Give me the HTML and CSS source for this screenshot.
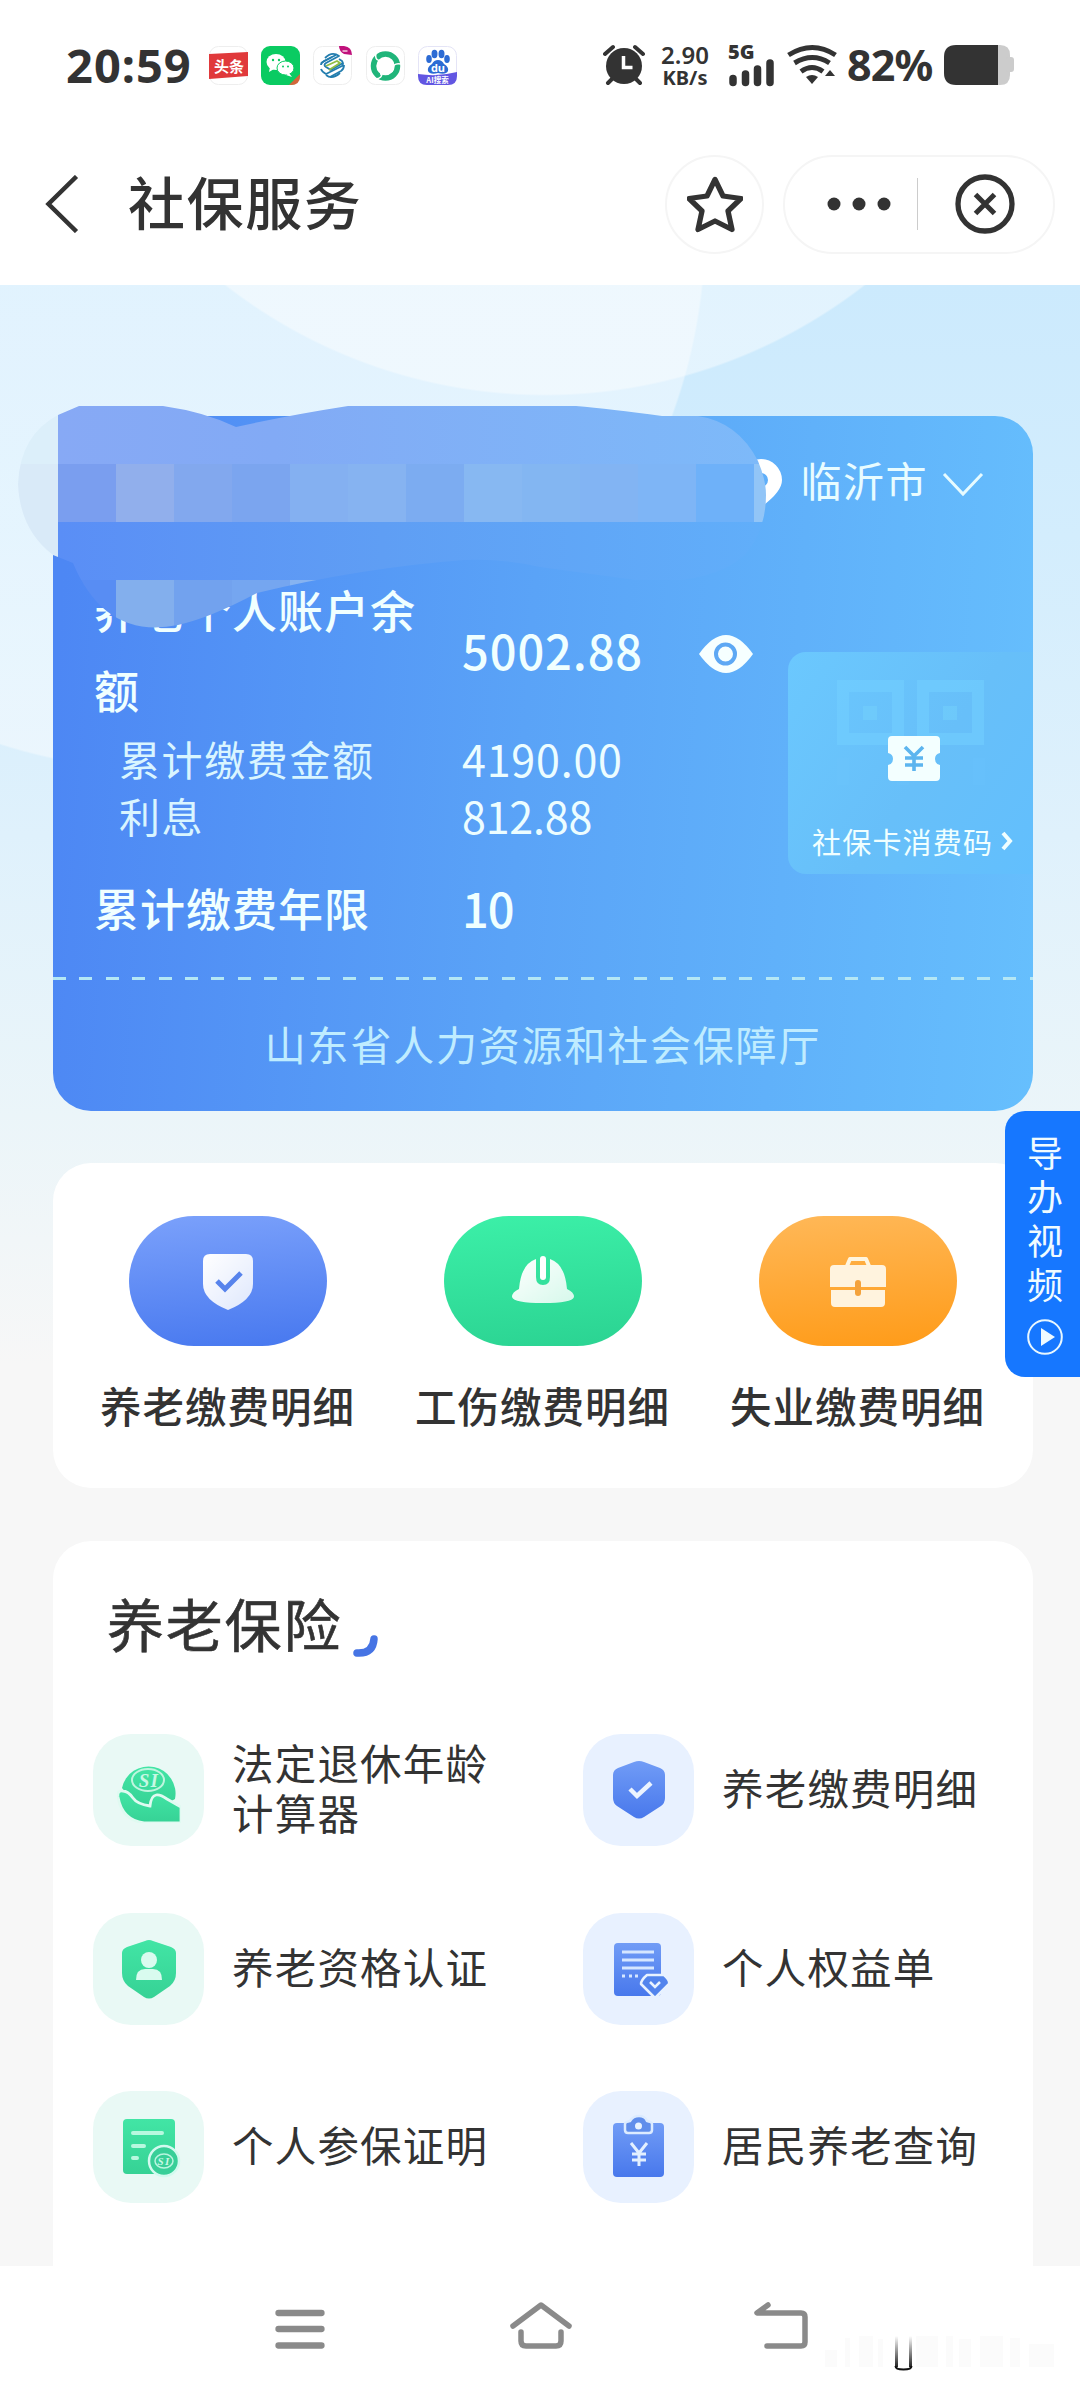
FILE: index.html
```html
<!DOCTYPE html>
<html lang="zh-CN">
<head>
<meta charset="utf-8">
<title>社保服务</title>
<link rel="stylesheet" href="styles.css">
</head>
<body>
<svg class="defs" width="0" height="0" aria-hidden="true">
  <defs>
    <linearGradient id="green" x1="0" y1="0" x2="0" y2="1"><stop offset="0" stop-color="#42e5a5"/><stop offset="1" stop-color="#36d295"/></linearGradient>
    <linearGradient id="blue" x1="0" y1="0" x2="0" y2="1"><stop offset="0" stop-color="#719cf6"/><stop offset="1" stop-color="#4878ec"/></linearGradient>
    <linearGradient id="pale" x1="0" y1="0" x2="1" y2="1"><stop offset="0" stop-color="#fff"/><stop offset="1" stop-color="#fff" stop-opacity=".8"/></linearGradient>
  </defs>
</svg>
<header class="statusbar">
  <span class="clock">20:59</span>
  <div class="apps">
    <svg class="app" viewBox="0 0 39 39"><rect x=".5" y=".5" width="38" height="38" rx="9" fill="#fff" stroke="#eee"/><path d="M0 8L39 6V30L0 33Z" fill="#e0393b"/><text x="5" y="25.5" class="app-toutiao">头条</text></svg>
    <svg class="app" viewBox="0 0 39 39"><rect width="39" height="39" rx="9" fill="#0acb62"/><path d="M28 39L39 28V30Q39 39 30 39Z" fill="#d4663b"/><ellipse cx="15" cy="16" rx="9.5" ry="8" fill="#fff"/><path d="M9 21l-1 5 5-3z" fill="#fff"/><circle cx="12" cy="14" r="1.2" fill="#0acb62"/><circle cx="18" cy="14" r="1.2" fill="#0acb62"/><ellipse cx="24.500" cy="22" rx="8.500" ry="7" fill="#fff" stroke="#0acb62"/><path d="M28 27l3 4-6-2z" fill="#fff"/><circle cx="22" cy="20.500" r="1" fill="#0acb62"/><circle cx="27" cy="20.500" r="1" fill="#0acb62"/></svg>
    <svg class="app" viewBox="0 0 39 39"><rect x=".5" y=".5" width="38" height="38" rx="9" fill="#fff" stroke="#eee"/><path d="M26 0h5q8 1 8 9l-8-1q-5-3-5-8z" fill="#c1127c"/><path d="M29.500 5h5" stroke="#e79cc6" stroke-width="2"/><g fill="none" stroke-width="1.800" stroke-linejoin="round"><path d="M12 12q7-7 14-2l-13 7q-3 2 0 4l5 3 12-7M8 17l11-6M13 29q6 5 14-2" stroke="#237dae"/><path d="M8 19q0-2 3-4l12-6M31 19q0 4-3 6l-11 6M8 23q1 3 5 5l16-8q2-2 0-5l-3-2" stroke="#237dae"/><path d="M13 20l11-5 3 2-11 7" stroke="#90bd43"/></g></svg>
    <svg class="app" viewBox="0 0 39 39"><rect x=".5" y=".5" width="38" height="38" rx="9" fill="#fff" stroke="#eee"/><circle cx="19.500" cy="20" r="12" fill="none" stroke="#20b57a" stroke-width="5.500"/><path d="M10 7q-2 9 8 8M35 18q-9-2-9 8M10 33q8-1 5-9" fill="none" stroke="#fff" stroke-width="1.500"/><path d="M14 24v5l4-2z" fill="#fff"/></svg>
    <svg class="app" viewBox="0 0 39 39"><rect x=".5" y=".5" width="38" height="38" rx="9" fill="#fff" stroke="#e4e4f6"/><path d="M0 28Q20 31 39 26V30Q39 39 30 39H9Q0 39 0 30Z" fill="#6256e2"/><g fill="#2c6bd4"><ellipse cx="11" cy="13" rx="2.800" ry="4"/><ellipse cx="16.500" cy="8" rx="3" ry="4.200"/><ellipse cx="23.500" cy="8" rx="3" ry="4.200"/><ellipse cx="29" cy="13" rx="2.800" ry="4"/><path d="M20 14q4 0 6 4 5 3 4 7-2 4-10 2-8 2-10-2-1-4 4-7 2-4 6-4z"/></g><text x="20" y="25.500" class="app-du">du</text><text x="19.500" y="36.800" class="app-ai">AI搜索</text></svg>
  </div>
  <svg class="alarm" viewBox="0 0 42 42"><path d="M2 10l8-7M40 10l-8-7M5 39l6-6M37 39l-6-6" stroke="#333" stroke-width="4" fill="none" stroke-linecap="round"/><circle cx="21" cy="22" r="18" fill="#333"/><path d="M20.500 12v11.500h9" fill="none" stroke="#fff" stroke-width="3.500"/></svg>
  <div class="speed"><b>2.90</b><span>KB/s</span></div>
  <div class="cell"><b>5G</b>
    <svg viewBox="0 0 46 28" width="46" height="28"><path d="M4 19.500v4M16.500 15v8.500M28.500 10v13.500M41 4v19.500" stroke="#333" stroke-width="7.500" stroke-linecap="round"/></svg>
  </div>
  <svg class="wifi" viewBox="0 0 50 42"><g fill="none" stroke="#333" stroke-width="5"><path d="M1.500 11q24-15 47 0"/><path d="M7.500 19q18-11 35 0"/><path d="M14 27.500q11-8 22 0"/></g><path d="M19 33q6-4 12 0l-6 7z" fill="#333"/><path d="M38 32l5-6 5 6z" fill="#333"/></svg>
  <span class="percent">82%</span>
  <svg class="battery" viewBox="0 0 70 40"><path d="M53 0h3q10 0 10 10v20q0 10-10 10h-3z" fill="#ccc"/><rect x="62" y="12" width="8" height="15" rx="3" fill="#ccc"/><path d="M54 0H12Q0 0 0 12v16q0 12 12 12h42z" fill="#333"/></svg>
</header>

<nav class="titlebar">
  <svg class="back" viewBox="0 0 34 58"><path d="M31.500 1.500L3.500 29l28 27.500" fill="none" stroke="#333" stroke-width="4.500"/></svg>
  <h1>社保服务</h1>
  <div class="round"><svg viewBox="0 0 56 58" width="56" height="58"><path d="M28 4.500l8 16.500 18 2.500-13 12.500 4 18.500-17-8.500-17 8.500 4-18.500L2 23.500 20 21z" fill="none" stroke="#333" stroke-width="5.300" stroke-linejoin="round"/></svg></div>
  <div class="capsule">
    <svg viewBox="0 0 64 14" width="64" height="14" fill="#333"><circle cx="7" cy="7" r="6.500"/><circle cx="32" cy="7" r="6.500"/><circle cx="57" cy="7" r="6.500"/></svg>
    <i></i>
    <svg viewBox="0 0 60 60" width="60" height="60" fill="none" stroke="#333"><circle cx="30" cy="30" r="27" stroke-width="5.300"/><path d="M20.500 20.500l19 19M39.500 20.500l-19 19" stroke-width="5"/></svg>
  </div>
</nav>

<main class="page">
  <section class="account-card">
    <div class="city">
      <svg viewBox="0 0 44 50" width="44" height="50"><path fill-rule="evenodd" d="M22 1a21 21 0 0 1 21 21q0 12-21 27Q1 34 1 22A21 21 0 0 1 22 1zm0 14a7 7 0 1 0 0 14 7 7 0 0 0 0-14z" fill="#fff"/></svg>
      <span>临沂市</span>
      <svg viewBox="0 0 42 26" width="42" height="26"><path d="M2 2l19 20L40 2" fill="none" stroke="#e6fbff" stroke-width="3"/></svg>
    </div>
    <div class="account-body">
      <dl class="figures">
        <div class="row main balance"><dt>养老个人账户余额</dt><dd>5002.88</dd>
          <svg viewBox="0 0 54 38" width="54" height="38"><path d="M0 19Q27-19 54 19 27 57 0 19z" fill="#f6ffff"/><circle cx="26.500" cy="19" r="9.500" fill="none" stroke="#5da8f4" stroke-width="4"/></svg>
        </div>
        <div class="row sub"><dt>累计缴费金额</dt><dd>4190.00</dd></div>
        <div class="row sub interest"><dt>利息</dt><dd>812.88</dd></div>
        <div class="row main years"><dt>累计缴费年限</dt><dd>10</dd></div>
      </dl>
      <a class="paycode">
        <svg viewBox="0 0 150 105" width="150" height="105">
          <g fill="none" stroke="#73d0ff" stroke-width="12"><path d="M6 6h55v53H6zM86 6h55v53H86z" opacity=".55"/></g>
          <path d="M26 26h14v14H26zM106 26h14v14h-14z" fill="#73cffc" opacity=".55"/><path d="M0 78h12v27H0zM60 78h12v27H60zM136 78h12v27h-12z" fill="#70c9ff" opacity=".18"/>
          <path d="M55 56h44q4 0 4 4v13q-5 1-5 6t5 6v12q0 4-4 4H55q-4 0-4-4V85q5-1 5-6t-5-6V60q0-4 4-4z" fill="#f3ffff"/>
          <path d="M68 67l9 9 9-9M77 76v15M68 78h18M68 85h18" fill="none" stroke="#5cb5ef" stroke-width="3.600"/>
        </svg>
        <span>社保卡消费码 <svg viewBox="0 0 12 20" width="12" height="20"><path d="M2 2l7 8-7 8" fill="none" stroke="#effeff" stroke-width="4"/></svg></span>
      </a>
    </div>
    <div class="dashes"></div>
    <p class="bureau">山东省人力资源和社会保障厅</p>
    <svg class="mosaic" viewBox="18 406 760 232" width="760" height="232">
      <defs>
        <clipPath id="smudge"><path d="M18 484Q20 435 58 415L79 406H163Q205 412 236 427Q290 415 348 406H576Q610 409 662 416L698 416Q738 422 758 461Q766 480 766 495Q766 530 745 555Q715 582 650 582L540 567Q500 558 464 560Q360 568 257 593Q210 618 178 625Q105 640 73 563L53 555Q20 530 18 484Z"/></clipPath>
        <linearGradient id="rowTop"><stop offset="0" stop-color="#87a9f5"/><stop offset=".3" stop-color="#82aaf5"/><stop offset="1" stop-color="#7dbaf9"/></linearGradient>
        <linearGradient id="rowMid"><stop offset="0" stop-color="#5a8ef6"/><stop offset=".45" stop-color="#5f9ef4"/><stop offset="1" stop-color="#61affa"/></linearGradient>
      </defs>
      <g clip-path="url(#smudge)" shape-rendering="crispEdges">
        <path d="M18 406h40v58H18z" fill="#dceffa"/><path d="M18 464h40v100H18z" fill="#d9eaf8"/>
        <path d="M58 406h720v58H58z" fill="url(#rowTop)"/>
        <path d="M58 464h58v58H58z" fill="#7a9eef"/><path d="M116 464h58v58h-58z" fill="#91afec"/><path d="M174 464h58v58h-58z" fill="#82a8ee"/><path d="M232 464h58v58h-58z" fill="#7ba5ef"/><path d="M290 464h58v58h-58z" fill="#84b0f1"/><path d="M348 464h58v58h-58z" fill="#86b3f1"/><path d="M406 464h58v58h-58z" fill="#7cacf1"/><path d="M464 464h58v58h-58z" fill="#87b8f2"/><path d="M522 464h58v58h-58z" fill="#83b6f2"/><path d="M580 464h58v58h-58z" fill="#82b4f3"/><path d="M638 464h58v58h-58z" fill="#7eb5f6"/><path d="M696 464h58v58h-58z" fill="#6eb1f9"/><path d="M754 464h24v58h-24z" fill="#92c5f7"/>
        <path d="M58 522h720v58H58z" fill="url(#rowMid)"/>
        <path d="M58 580h58v58H58z" fill="#588df3"/><path d="M116 580h58v58h-58z" fill="#83afed"/><path d="M174 580h58v58h-58z" fill="#72a2ee"/><path d="M232 580h58v58h-58z" fill="#75a6f0"/><path d="M290 580h58v58h-58z" fill="#86b3f1"/>
      </g>
    </svg>
  </section>

  <section class="quick">
    <a><span class="pill pill-blue"><svg viewBox="0 0 66 66" width="66" height="66"><path d="M15 6h36q7 0 7 7v23q0 16-25 26Q8 52 8 36V13q0-7 7-7z" fill="url(#pale)"/><path d="M22 33l8 8 16-16" fill="none" stroke="#5783ec" stroke-width="5"/></svg></span>养老缴费明细</a>
    <a><span class="pill pill-green"><svg viewBox="0 0 66 66" width="66" height="66"><path d="M9 41Q11 16 26 11v18q0 8 7 8t7-8V11q15 5 17 30 7 3 7 8-2 6-31 6T2 49q0-5 7-8z" fill="url(#pale)"/><path d="M33 11v18" stroke="#fff" stroke-width="6" stroke-linecap="round"/></svg></span>工伤缴费明细</a>
    <a><span class="pill pill-orange"><svg viewBox="0 0 66 66" width="66" height="66"><path d="M22 18l3-7h16l3 7" fill="none" stroke="#fff5df" stroke-width="4" stroke-linejoin="round"/><path d="M9 17h48q4 0 4 4v18H5V21q0-4 4-4zM6 42h54v13q0 4-4 4H10q-4 0-4-4z" fill="#fff3de"/><path d="M33 35v10" stroke="#f4a23c" stroke-width="6" stroke-linecap="round"/></svg></span>失业缴费明细</a>
  </section>

  <section class="pension">
    <h2>养老保险<svg viewBox="0 0 26 24" width="26" height="24"><path d="M4 19Q20 20 21 5" fill="none" stroke="#4674e4" stroke-width="7.500" stroke-linecap="round"/></svg></h2>
    <div class="services">
      <a><span class="tile mint"><svg viewBox="0 0 64 66" width="64" height="66"><path d="M5 31A27 27 0 1 1 58 42L44 50H20z" fill="url(#green)"/><ellipse cx="31" cy="23" rx="16" ry="11" fill="none" stroke="#bff5df" stroke-width="2"/><text x="32" y="30" class="si">SI</text><path d="M1 40Q0 33 6 34q5 0 10 7 4 6 17 8 1-10 6-11 4-1 11 4l14 8v16H27Q5 63 1 40z" fill="url(#green)" stroke="#e0faf1" stroke-width="2.800"/></svg></span>法定退休年龄<br>计算器</a>
      <a><span class="tile sky"><svg viewBox="0 0 64 66" width="64" height="66"><path d="M27 5q5-2 10 0l16 6q5 2 5 7v23q0 5-4 8L37 60q-5 3-10 0L10 49q-4-3-4-8V18q0-5 5-7z" fill="url(#blue)"/><path d="M23 32l7 7 14-13" fill="none" stroke="#ebf4ff" stroke-width="4.500"/></svg></span>养老缴费明细</a>
      <a><span class="tile mint"><svg viewBox="0 0 64 66" width="64" height="66"><path d="M28 5q4-2 8 0l18 6q5 2 5 6v20q0 8-6 13L37 61q-5 3-10 0L11 50q-6-5-6-13V17q0-4 5-6z" fill="url(#green)"/><circle cx="32" cy="24" r="8" fill="#d9fbef"/><path d="M19 44q0-11 9-11h8q9 0 9 11z" fill="#d9fbef"/></svg></span>养老资格认证</a>
      <a><span class="tile sky"><svg viewBox="0 0 64 66" width="64" height="66"><rect x="7" y="7" width="47" height="53" rx="4" fill="url(#blue)"/><path d="M15 16h32M15 24h32M15 32h32M15 40h3M22 40h3M28 40h3" stroke="#d5e6ff" stroke-width="2.800"/><path d="M40 39h17q6 5 5 9L48 62 34 48q0-4 6-9z" fill="#5284ed" stroke="#e8f2ff" stroke-width="2.500" stroke-linejoin="round"/><path d="M43 46l5 5 5-5" fill="none" stroke="#e8f2ff" stroke-width="2.500"/></svg></span>个人权益单</a>
      <a><span class="tile mint"><svg viewBox="0 0 64 66" width="64" height="66"><rect x="6" y="5" width="52" height="55" rx="4" fill="url(#green)"/><path d="M16 19h29M16 32h11M16 44h4" stroke="#b8f8df" stroke-width="4" stroke-linecap="round"/><circle cx="47" cy="47" r="15" fill="#38cf98" stroke="#d3faef" stroke-width="2.500"/><ellipse cx="47" cy="47" rx="9" ry="7" fill="none" stroke="#baf5df" stroke-width="1.500"/><text x="47" y="51" class="si si-small">SI</text></svg></span>个人参保证明</a>
      <a><span class="tile sky"><svg viewBox="0 0 64 66" width="64" height="66"><rect x="6" y="9" width="51" height="54" rx="4" fill="url(#blue)"/><path d="M18 10q0-2 5-3 3-5 9-5t8 5q5 1 5 3v6q0 3-3 3H21q-3 0-3-3z" fill="#608eeb" stroke="#dcebff" stroke-width="2.500" stroke-linejoin="round"/><circle cx="31.500" cy="12" r="3.500" fill="#e8f3ff"/><path d="M24 29l8 10 8-10M32 39v13M25 40h14M25 46h14" fill="none" stroke="#e3f0ff" stroke-width="3"/></svg></span>居民养老查询</a>
    </div>
  </section>
</main>

<aside class="guide">
  <span>导</span><span>办</span><span>视</span><span>频</span>
  <svg viewBox="0 0 36 36" width="36" height="36"><circle cx="18" cy="18" r="16.800" fill="none" stroke="#e8f7ff" stroke-width="2"/><path d="M14 9l14 9-14 9z" fill="#f0fbff"/></svg>
</aside>

<footer class="navbar">
  <svg viewBox="0 0 50 48" width="50" height="48"><path d="M3.500 12h43M3.500 28h43M3.500 44.500h43" stroke="#8a8a8a" stroke-width="6.300" stroke-linecap="round"/></svg>
  <svg viewBox="0 0 64 48" width="64" height="48" fill="none" stroke="#8a8a8a" stroke-width="5.500" stroke-linecap="round" stroke-linejoin="round"><path d="M4 25L32 4l28 21"/><path d="M12 31v9q0 5 5 5h30q5 0 5-5v-9"/></svg>
  <svg viewBox="0 0 54 48" width="54" height="48" fill="none" stroke="#8a8a8a" stroke-width="5.500" stroke-linecap="round" stroke-linejoin="round"><path d="M14 4L3 12h44q4 0 4 4v25q0 4-4 4H13"/></svg>
  <svg class="smear" viewBox="0 0 230 38" width="230" height="38">
    <defs><linearGradient id="fade" x1="0" y1="0" x2="0" y2="1"><stop offset="0" stop-color="#222" stop-opacity="0"/><stop offset="1" stop-color="#222"/></linearGradient></defs>
    <path d="M0 16h12v17H0zM20 4h5v29h-5zM34 2h14v31H34zM53 5h5v28h-5zM91 2h22v31H91zM121 2h7v31h-7zM134 5h12v28h-12zM155 2h23v31h-23zM185 4h10v29h-10zM204 10h25v23h-25z" fill="#fbfbfb"/>
    <path d="M70 2h3v31h-3zM84 2h3v31h-3z" fill="url(#fade)"/><path d="M70.500 32q0 3.500 8 3.500t8-3.500" fill="none" stroke="#111" stroke-width="2"/>
  </svg>
</footer>
</body>
</html>
```
FILE: styles.css
```css
* { box-sizing: border-box; }
body {
  position: relative;
  width: 1080px;
  height: 2392px;
  margin: 0;
  overflow: hidden;
  display: flex;
  flex-direction: column;
  background: #fff;
  color: #333;
  font-family: "Noto Sans CJK SC", "Noto Sans", sans-serif;
}
h1, h2, p, dl, dt, dd { margin: 0; font-weight: 500; }
svg { display: block; flex: none; }
.defs { position: absolute; }

/* status bar */
.statusbar {
  height: 130px;
  display: flex;
  align-items: center;
  font-family: "Noto Sans", sans-serif;
  font-weight: 700;
  white-space: nowrap;
}
.clock { width: 143px; margin-left: 66px; padding-bottom: 1px; font-size: 47px; letter-spacing: 1px; }
.apps { display: flex; gap: 13.200px; width: 394px; }
.app { width: 39px; height: 39px; }
.app-toutiao { font: 700 15px "Noto Sans CJK SC", sans-serif; fill: #fff; }
.app-du { font: 700 11px "Open Sans", sans-serif; fill: #fff; text-anchor: middle; }
.app-ai { font: 700 7.5px "Noto Sans CJK SC", sans-serif; fill: #fff; text-anchor: middle; }
.alarm { width: 42px; height: 42px; }
.speed {
  width: 80px;
  margin-right: 3px;
  padding-top: 2px;
  display: flex;
  flex-direction: column;
  align-items: center;
  font-size: 20px;
  line-height: 23px;
}
.speed b { font-size: 24px; font-weight: 600; }
.cell { width: 59px; height: 42px; padding-top: 1px; display: flex; flex-direction: column; font-size: 20px; line-height: 14px; }
.cell svg { margin-left: 1px; }
.wifi { width: 50px; height: 42px; }
.percent { width: 107px; padding-left: 10px; padding-bottom: 1px; font-size: 43px; letter-spacing: -.8px; }
.battery { width: 70px; height: 40px; }

/* title bar */
.titlebar { height: 155px; padding-bottom: 7px; display: flex; align-items: center; }
.back { width: 34px; height: 58px; margin-left: 45px; }
h1 { flex: none; width: 586px; padding: 0 0 8px 49px; font-size: 57px; letter-spacing: 1.6px; line-height: 80px; }
.round, .capsule { flex: none; height: 99px; border: 2px solid #f5f5f5; border-radius: 50px; display: flex; align-items: center; }
.round { width: 99px; justify-content: center; margin-right: 19px; }
.capsule { width: 272px; padding-left: 42px; }
.capsule i { width: 1px; height: 52px; margin: 0 37px 0 26px; background: #ccc; }

/* page */
.page {
  height: 1981px;
  padding: 131px 47px 0 53px;
  overflow: hidden;
  background:
    radial-gradient(circle at 545px -410px, rgba(255,255,255,.44) 519px, transparent 521px),
    radial-gradient(circle at 165px -55px, rgba(255,255,255,.42) 539px, transparent 541px),
    linear-gradient(180deg, #cceafd 0, #d3edfd 250px, #dff1fc 550px, #ebf5f9 830px, #f7f7f7 1080px);
}

/* account card */
.account-card {
  position: relative;
  height: 695px;
  border-radius: 38px;
  background: linear-gradient(94deg, #4d87f4 2%, #5aa3f7 48%, #66bffd 100%);
  color: #f0ffff;
}
.city { height: 156px; padding: 42px 49px 0 0; display: flex; justify-content: flex-end; align-items: flex-start; color: #e8fcff; }
.city span { margin: -2px 14px 0 17px; font-size: 41px; line-height: 46px; letter-spacing: 1.5px; font-weight: 400; }
.city svg:first-child { margin-right: 1px; }
.city svg:last-child { margin-top: 14px; }
.account-body { display: flex; height: 405px; }
.figures { width: 735px; padding-left: 41px; }
.row { display: flex; align-items: center; padding-bottom: 5px; }
.row dt { width: 368px; padding-right: 30px; }
.row dd { width: 237px; }
.main { font-size: 45px; letter-spacing: 1px; line-height: 80px; }
.main dd { font-size: 47px; letter-spacing: .9px; }
.balance { height: 160px; }
.balance svg { margin-top: 9px; }
.years { height: 129px; }
.years dd { letter-spacing: -1px; }
.sub { height: 57px; font-size: 41px; letter-spacing: 1.6px; color: #d9f5ff; }
.sub dt { padding-left: 25px; font-weight: 400; white-space: nowrap; padding-right: 0; }
.sub dd { font-size: 43px; color: #ecfdff; font-weight: 400; letter-spacing: .8px; }
.interest dd { letter-spacing: -.2px; }
.paycode {
  width: 245px;
  height: 222px;
  margin-top: 80px;
  padding: 28px 0 0 24px;
  border-radius: 18px 0 0 18px;
  background: linear-gradient(125deg, #6bc8fe, #67bff9 55%, #62bffd);
}
.paycode > svg { margin-left: 25px; }
.paycode span { display: flex; align-items: center; gap: 8px; margin-top: 33px; font-size: 29px; letter-spacing: 1.2px; line-height: 46px; white-space: nowrap; }
.dashes { height: 3px; background: repeating-linear-gradient(90deg, #b4e7f5 0 13px, transparent 13px 26.400px); }
.bureau { line-height: 126px; text-align: center; font-size: 41px; letter-spacing: 1.8px; color: #bfecff; font-weight: 400; }
.mosaic { position: absolute; left: -35px; top: -10px; }

/* shortcuts */
.quick { height: 325px; margin-top: 52px; padding: 53px 18px 0 17px; display: flex; border-radius: 38px; background: #fff; }
.quick a { flex: 1; display: flex; flex-direction: column; align-items: center; font-size: 41.5px; font-weight: 500; letter-spacing: 1px; line-height: 60px; }
.pill { width: 198px; height: 130px; margin-bottom: 29px; border-radius: 65px; display: flex; align-items: center; justify-content: center; }
.pill-blue { background: linear-gradient(175deg, #7ba1fb, #4778ef); }
.pill-green { background: linear-gradient(175deg, #3cf0a8, #2bd392); }
.pill-orange { background: linear-gradient(175deg, #ffb858, #ff9b18); }

/* pension services */
.pension { height: 760px; margin-top: 53px; padding: 45px 0 0 40px; border-radius: 38px; background: #fff; }
h2 { height: 80px; padding-left: 14px; display: flex; align-items: flex-start; font-size: 57px; letter-spacing: 1.800px; line-height: 73px; font-weight: 400; -webkit-text-stroke: .6px #333; }
h2 svg { margin: 48px 0 0 11px; }
.services { display: grid; grid-template-columns: 490px 450px; grid-auto-rows: 112px; row-gap: 66.500px; margin-top: 68px; }
.services a { position: relative; display: grid; align-content: center; padding: 0 0 6px 139px; font-size: 41.5px; letter-spacing: 1.200px; line-height: 50px; white-space: nowrap; }
.tile { position: absolute; left: 0; top: 0; width: 111px; height: 112px; border-radius: 38px; display: flex; align-items: center; justify-content: center; }
.mint { background: #e9f9f5; }
.sky { background: #e8f1ff; }
.si { font: italic 700 19px "Liberation Serif", serif; fill: #c8f8e4; text-anchor: middle; }
.si-small { font-size: 11px; }

/* floating guide tab */
.guide {
  position: absolute;
  right: 0;
  top: 1111px;
  width: 75px;
  height: 266px;
  padding: 18px 0 0 5px;
  border-radius: 20px 0 0 20px;
  background: #1677ff;
  color: #f0fbff;
  font-size: 36px;
  line-height: 44px;
  display: flex;
  flex-direction: column;
  align-items: center;
}
.guide svg { margin-top: 14px; }

/* system navigation */
.navbar { position: relative; height: 126px; padding: 35px 0 0 275px; display: flex; align-items: flex-start; background: #fff; }
.navbar svg:nth-child(2) { margin: 0 181px 0 184px; }
.smear { position: absolute; left: 825px; top: 68px; }
```
